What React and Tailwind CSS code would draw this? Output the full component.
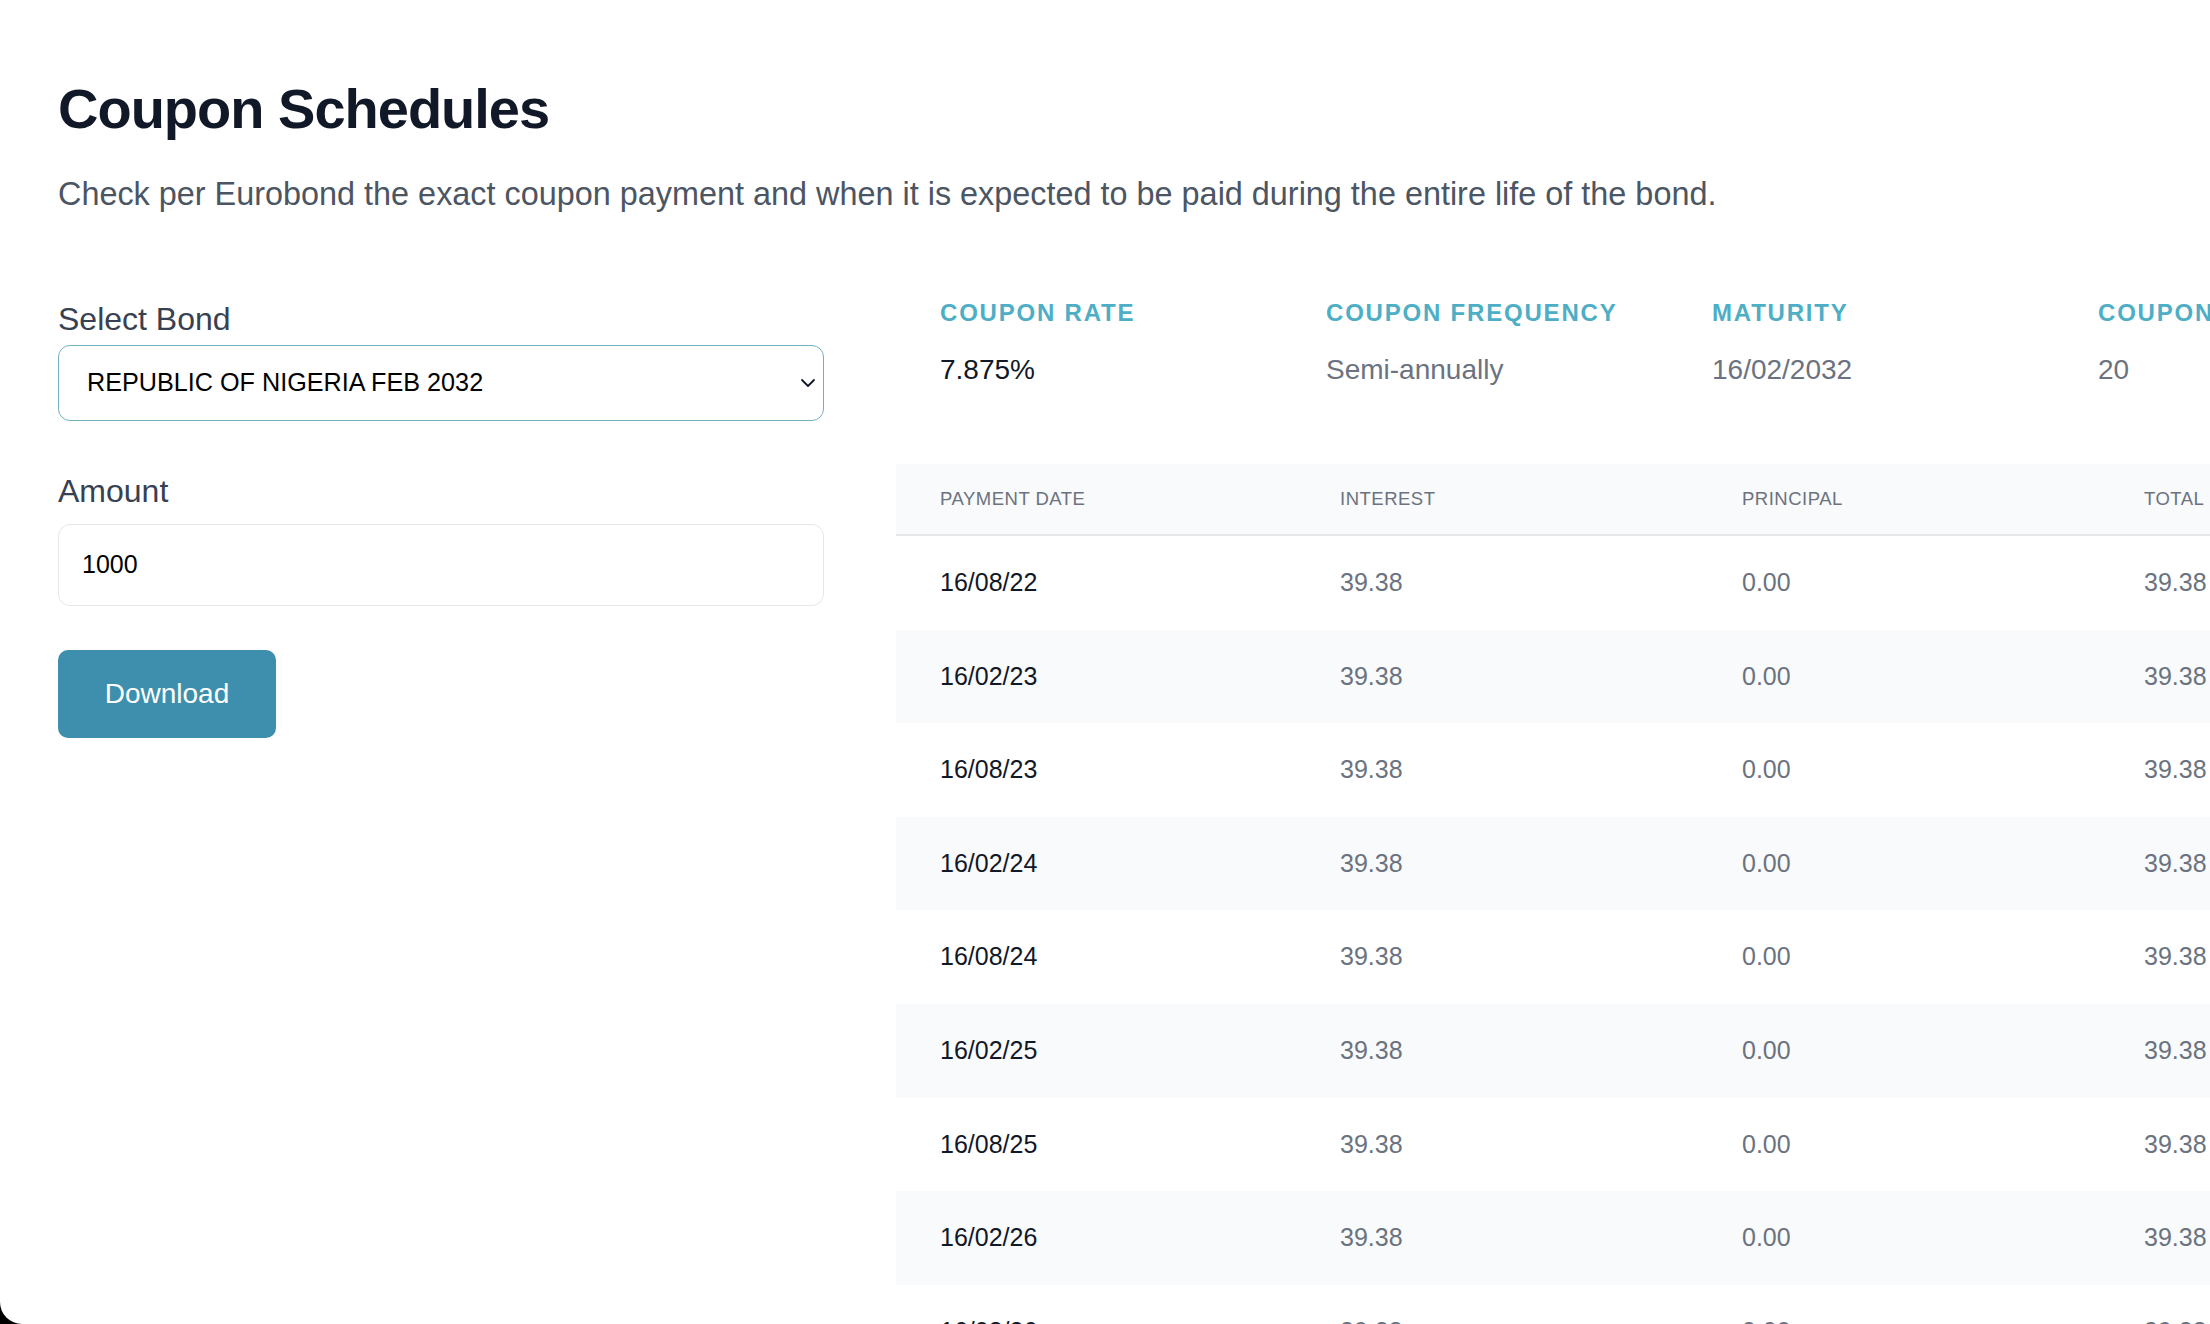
import React from "react";

const STATS = [
  { label: "Coupon Rate", value: "7.875%", cls: "text-[#111827]" },
  { label: "Coupon Frequency", value: "Semi-annually", cls: "text-[#6b7280]" },
  { label: "Maturity", value: "16/02/2032", cls: "text-[#6b7280]" },
  { label: "Coupon Payments", value: "20", cls: "text-[#6b7280]" },
];

const HEADERS = ["Payment Date", "Interest", "Principal", "Total"];

// 20 semi-annual payments, Aug 2022 -> Feb 2032
const ROWS = Array.from({ length: 20 }, (_, i) => {
  const year = 22 + Math.floor((i + 1) / 2);
  const month = i % 2 === 0 ? "08" : "02";
  const last = i === 19;
  return {
    date: `16/${month}/${year}`,
    interest: "39.38",
    principal: last ? "1000.00" : "0.00",
    total: last ? "1039.38" : "39.38",
  };
});

const Chevron = () => (
  <svg width="16" height="10" viewBox="0 0 16 10" fill="none" stroke="#111827" strokeWidth="1.8" strokeLinecap="round" strokeLinejoin="round">
    <path d="M2 2l6 6 6-6" />
  </svg>
);

export default function App() {
  return (
    <div className="h-[1324px] w-[2210px] overflow-hidden bg-black font-['Liberation_Sans',Arial,sans-serif]">
      <div className="h-full bg-white rounded-bl-[22px] pl-[58px] pt-[77px]">
        <h1 className="text-[56px] leading-[64px] font-bold tracking-[-1px] text-[#111827]">Coupon Schedules</h1>
        <p className="mt-[29px] text-[32.4px] leading-[48px] text-[#4b5563] whitespace-nowrap">
          Check per Eurobond the exact coupon payment and when it is expected to be paid during the entire life of the bond.
        </p>

        <div className="mt-[81px] flex gap-[72px]">
          {/* form */}
          <div className="w-[766px] shrink-0">
            <label className="block text-[32px] leading-[40px] text-[#374151]">Select Bond</label>
            <div className="mt-[6px] h-[76px] rounded-[12px] border-[1.5px] border-[#72afc0] pl-[28px] pr-[7px] flex items-center justify-between">
              <span className="text-[25.2px] text-black">REPUBLIC OF NIGERIA FEB 2032</span>
              <Chevron />
            </div>

            <label className="mt-[50px] block text-[32px] leading-[40px] text-[#374151]">Amount</label>
            <div className="mt-[13px] h-[82px] rounded-[12px] border-[1.5px] border-[#e5e7eb] pl-[23px] flex items-center">
              <span className="text-[25px] text-black">1000</span>
            </div>

            <button className="mt-[44px] w-[218px] h-[88px] rounded-[10px] bg-[#3d8fad] text-white text-[28px]">Download</button>
          </div>

          {/* schedule */}
          <div className="w-[1700px] shrink-0">
            <div className="grid grid-cols-[386px_386px_386px_386px]">
              {STATS.map((s) => (
                <div key={s.label} className="pl-[44px] whitespace-nowrap">
                  <div className="text-[24px] leading-[28px] font-bold uppercase tracking-[1.8px] text-[#4daec6]">{s.label}</div>
                  <div className={`mt-[25px] text-[28px] leading-[36px] ${s.cls}`}>{s.value}</div>
                </div>
              ))}
            </div>

            <div className="mt-[76px]">
              <div className="h-[72px] bg-[#f9fafb] border-b-2 border-[#e5e7eb] grid grid-cols-[400px_402px_402px_402px] items-center">
                {HEADERS.map((h) => (
                  <div key={h} className="pl-[44px] text-[18.5px] uppercase tracking-[0.5px] text-[#6b7280]">{h}</div>
                ))}
              </div>
              {ROWS.map((r, i) => (
                <div
                  key={r.date}
                  className={`h-[93.6px] grid grid-cols-[400px_402px_402px_402px] items-center text-[25px] ${i % 2 ? "bg-[#f9fafb]" : "bg-white"}`}
                >
                  <div className="pl-[44px] text-[#111827]">{r.date}</div>
                  <div className="pl-[44px] text-[#6b7280]">{r.interest}</div>
                  <div className="pl-[44px] text-[#6b7280]">{r.principal}</div>
                  <div className="pl-[44px] text-[#6b7280]">{r.total}</div>
                </div>
              ))}
            </div>
          </div>
        </div>
      </div>
    </div>
  );
}
